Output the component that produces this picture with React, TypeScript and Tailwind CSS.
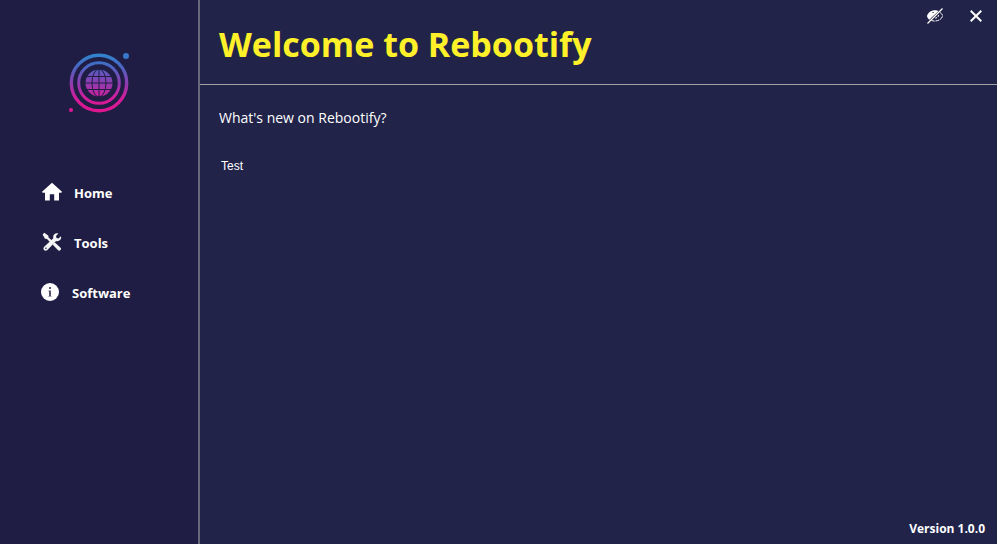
import React from "react";

function Logo() {
  return (
    <svg viewBox="0 0 64 64" className="h-16 w-16" role="img" aria-label="Rebootify">
      <defs>
        <linearGradient id="brand" gradientUnits="userSpaceOnUse" x1="0" y1="3" x2="0" y2="61">
          <stop offset="0" stopColor="#2f86cf" />
          <stop offset="0.2" stopColor="#4668c4" />
          <stop offset="0.5" stopColor="#8d3db0" />
          <stop offset="0.75" stopColor="#d01d9c" />
          <stop offset="1" stopColor="#e0168f" />
        </linearGradient>
      </defs>
      <g fill="none" stroke="url(#brand)">
        <circle cx="32" cy="32" r="27.7" strokeWidth="3.4" />
        <circle cx="32" cy="32" r="20.3" strokeWidth="3" />
      </g>
      <circle cx="32" cy="32" r="13.5" fill="url(#brand)" />
      <g fill="none" stroke="#1f1d43" strokeWidth="1">
        <ellipse cx="32" cy="32" rx="7" ry="14" />
        <path d="M32 18v28M18 32h28M19 25.5h26M19 38.5h26" />
      </g>
      <circle cx="59" cy="5" r="3" fill="#3a78cc" />
      <circle cx="4" cy="59" r="2.1" fill="#dc1896" />
    </svg>
  );
}

function HomeIcon() {
  return (
    <svg viewBox="0 0 20 20" className="h-5 w-5" fill="#fff" aria-hidden="true">
      <path d="M10 .8 20 9.8l-.7 1H17V18.4h-4.8v-6.1H7.8v6.1H3v-7.600H.7L0 9.800z" />
    </svg>
  );
}

function ToolsIcon() {
  return (
    <svg viewBox="0 0 20 20" className="h-5 w-5" aria-hidden="true">
      <path d="M.6 2.400 2.300.8l3.900 2.600.4 2 3.800 3.700-1.700 1.700L5 7.100 3 6.700z" fill="#f4f4f4" />
      <path d="m11.400 11.200 1.500-.7 5.700 5.200c1.500 1.700-1 4-2.500 2.500l-5.300-5.500z" fill="#f4f4f4" />
      <path d="M18.900 4.200 16.500 6.500l-2-.5-.5-2 2.400-2.400c-3-1.100-6 1.300-5.100 4.600L2.200 14.700c-2.300 2.300.8 5.500 3.200 3.200l8.700-8.900c3.200.9 5.900-1.800 4.800-4.800z" fill="#f4f4f4" />
      <circle cx="3.900" cy="16.300" r=".8" fill="#1f1d43" />
    </svg>
  );
}

function InfoIcon() {
  return (
    <svg viewBox="0 0 18 18" className="h-[18px] w-[18px]" aria-hidden="true">
      <circle cx="9" cy="9" r="9" fill="#fff" />
      <path d="M8 4h2v2H8zM8 7.500h2v6H8z" fill="#56546f" />
      <path d="M7 7.500h1v1H7zM7 13h4v.800H7z" fill="#a9a8b8" />
    </svg>
  );
}

function HiddenEyeIcon() {
  return (
    <svg viewBox="0 0 16 16" className="h-4 w-4" fill="none" stroke="#fff" aria-hidden="true">
      <path d="M0 8C1 4.500 4 2.200 8 2.200c1.500 0 2.500.300 3.500.900L8.500 6 5 9 2.500 11.700C1 10.800.200 9.500 0 8z" fill="#fff" stroke="none" />
      <path d="M5.500 4.500h1.200" stroke="#212349" />
      <path d="M13 4.500c1.300.8 2.500 2 2.500 3.500-.5 3-4 5-8 5-1 0-2-.2-3-.5" strokeDasharray="4 .8" />
      <path d="M11.500 7c0 2-1.500 3-3.500 3.200" strokeDasharray="2 1" />
      <path d="M.5 15.500 15.500.5" strokeWidth="1.200" />
    </svg>
  );
}

const links = [
  { label: "Home", icon: <HomeIcon />, spacing: "gap-3 pl-[42px]" },
  { label: "Tools", icon: <ToolsIcon />, spacing: "gap-3 pl-[42px]" },
  { label: "Software", icon: <InfoIcon />, spacing: "gap-[13px] pl-[41px]" },
];

export default function App() {
  return (
    <div className="flex min-h-screen bg-[#212349] font-['Open_Sans','Noto_Sans',sans-serif] text-white">
      <aside className="flex w-[200px] shrink-0 flex-col border-r-2 border-[#696879] bg-[#1f1d43]">
        <div className="flex justify-center pt-[51px] pb-[52px]">
          <Logo />
        </div>
        <nav className="flex flex-col">
          {links.map((l) => (
            <button key={l.label} type="button" className={"flex h-[50px] items-center text-[13px] font-bold " + l.spacing}>
              {l.icon}
              <span className="pt-0.5 leading-5">{l.label}</span>
            </button>
          ))}
        </nav>
      </aside>
      <div className="flex min-w-0 grow flex-col">
        <header className="flex h-[85px] shrink-0 items-start justify-between border-b border-[#a2a2a2] pl-[19px]">
          <h1 className="pt-5 text-[34px] leading-[48px] font-bold whitespace-nowrap text-[#fff129]">Welcome to Rebootify</h1>
          <div className="flex gap-[5px] pt-px pr-[3px]">
            <button type="button" aria-label="Hide" className="flex h-[30px] w-9 items-center justify-center">
              <HiddenEyeIcon />
            </button>
            <button type="button" aria-label="Close" className="flex h-[30px] w-9 items-center justify-center">
              <svg viewBox="0 0 12 12" className="h-3 w-3" stroke="#fff" strokeWidth="2" aria-hidden="true">
                <path d="M.7.7l10.600 10.600M11.300.7.7 11.300" />
              </svg>
            </button>
          </div>
        </header>
        <main className="flex grow flex-col pl-[19px]">
          <h2 className="pt-[23px] text-sm leading-5">What's new on Rebootify?</h2>
          <p className="pt-[30px] pl-[2px] font-['Liberation_Sans',sans-serif] text-xs leading-4">Test</p>
        </main>
        <footer className="pr-3 pb-[7px] text-right text-xs leading-4 font-bold">Version 1.0.0</footer>
      </div>
    </div>
  );
}
